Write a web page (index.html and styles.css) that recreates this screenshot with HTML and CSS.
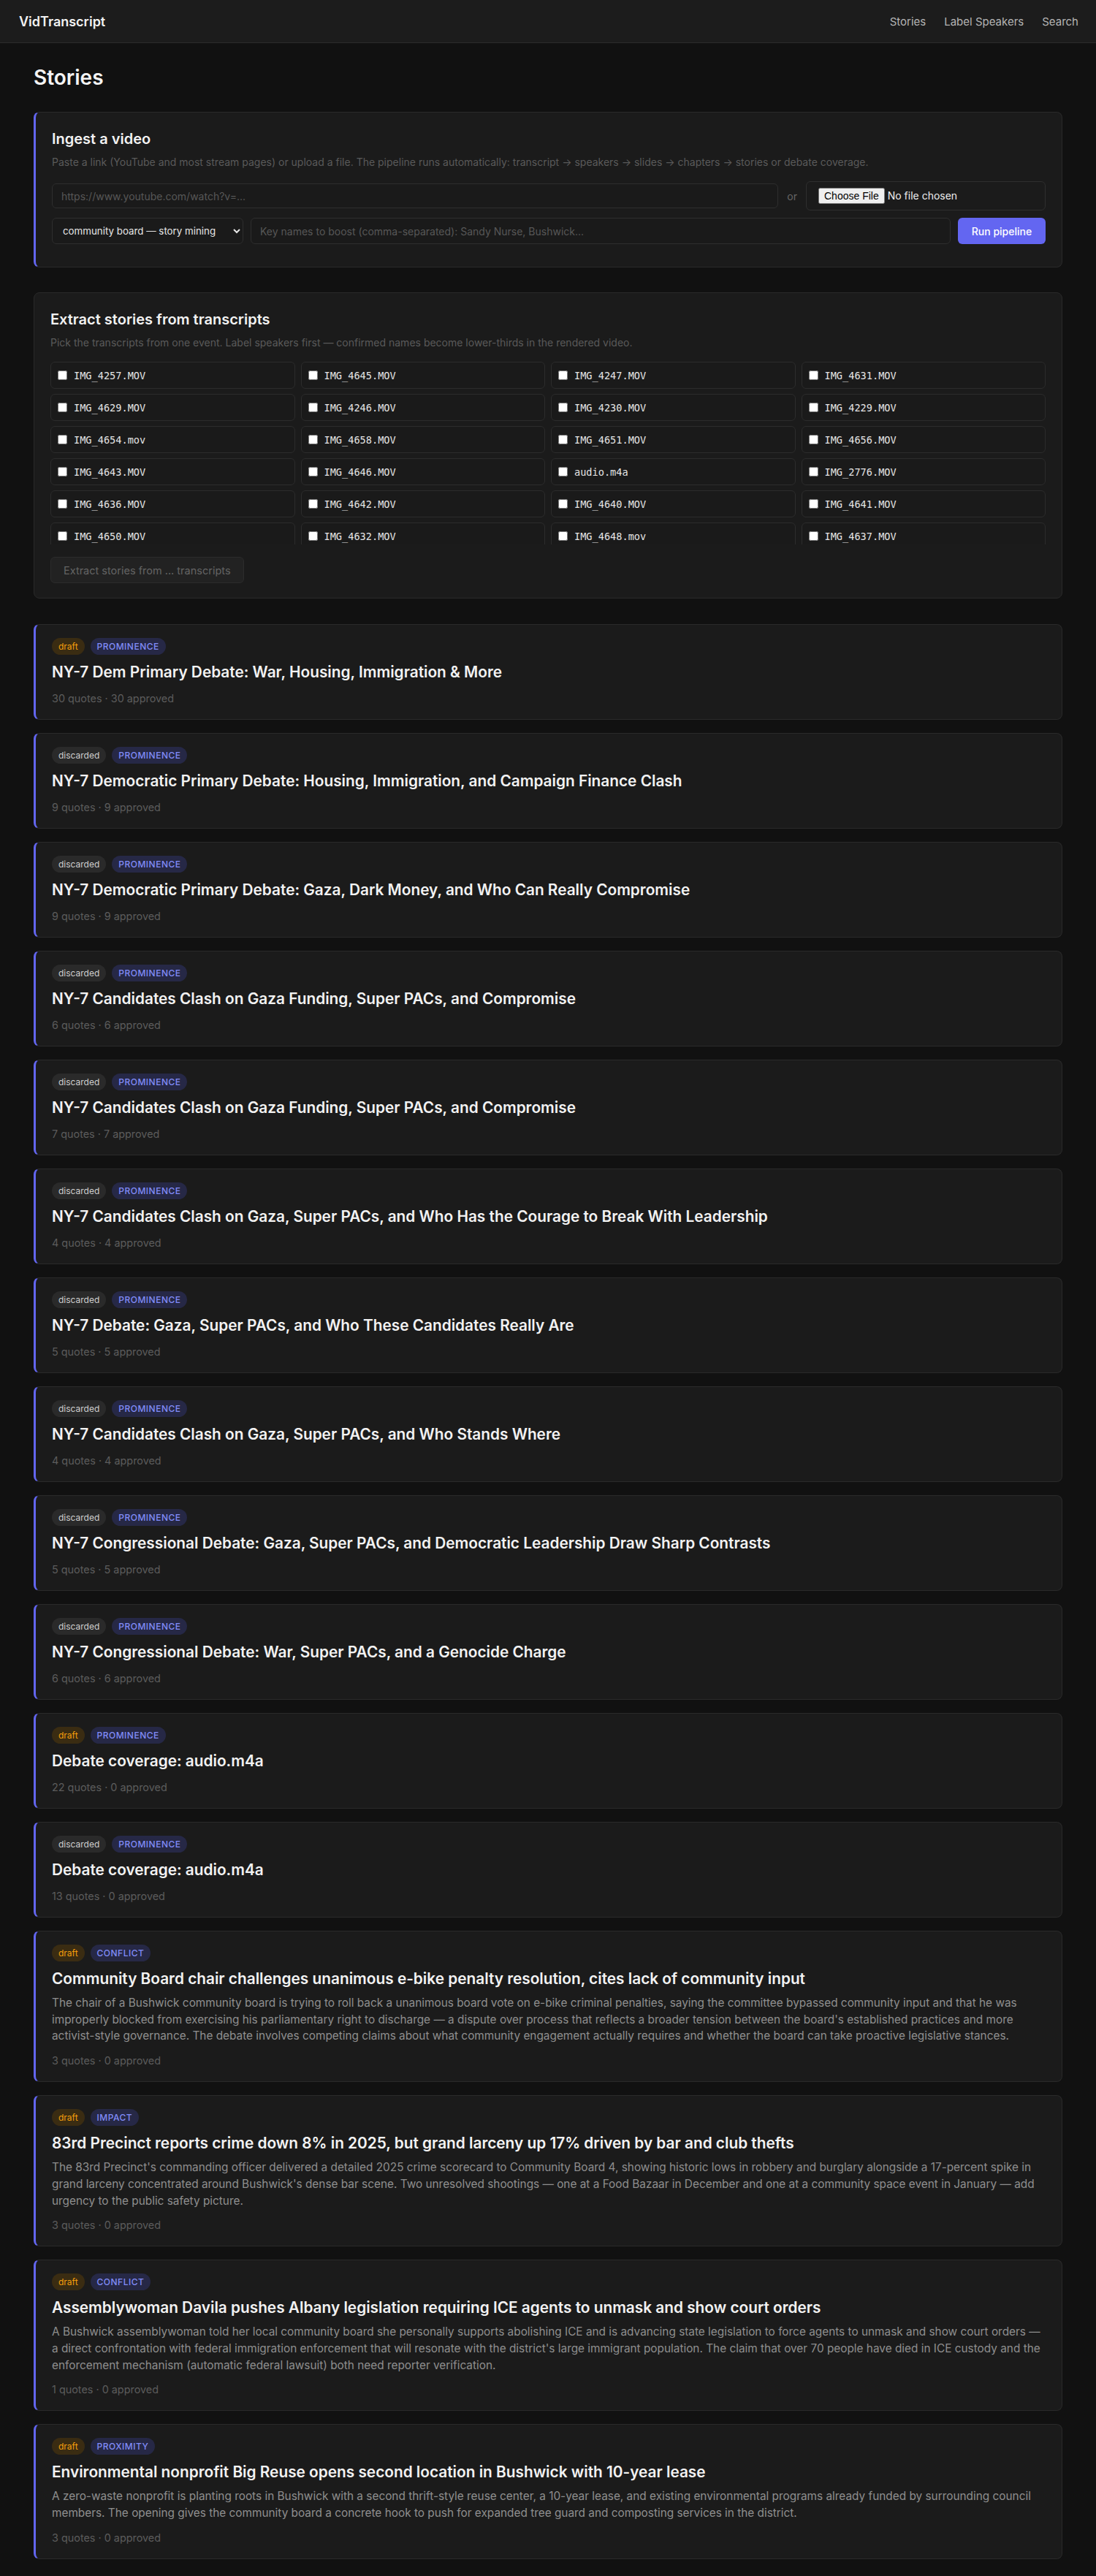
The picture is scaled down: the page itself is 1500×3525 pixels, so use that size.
FILE: index.html
```html
<!DOCTYPE html>
<html lang="en">
<head>
<meta charset="utf-8">
<title>VidTranscript — Stories</title>
<link rel="stylesheet" href="styles.css">
</head>
<body>
<header class="topbar">
  <div class="brand">VidTranscript</div>
  <nav class="nav">
    <a href="#">Stories</a>
    <a href="#">Label Speakers</a>
    <a href="#">Search</a>
  </nav>
</header>

<main class="main">
  <h1 class="page-title">Stories</h1>

  <section class="panel panel-accent">
    <h2 class="panel-title">Ingest a video</h2>
    <p class="panel-sub">Paste a link (YouTube and most stream pages) or upload a file. The pipeline runs automatically: transcript → speakers → slides → chapters → stories or debate coverage.</p>
    <div class="form-row">
      <input class="field field-url" type="text" placeholder="https://www.youtube.com/watch?v=...">
      <span class="or">or</span>
      <div class="filebox"><input type="file" class="file"></div>
    </div>
    <div class="form-row">
      <select class="field field-select">
        <option>community board — story mining</option>
      </select>
      <input class="field field-keys" type="text" placeholder="Key names to boost (comma-separated): Sandy Nurse, Bushwick...">
      <button class="btn-primary" type="button">Run pipeline</button>
    </div>
  </section>

  <section class="panel panel-extract">
    <h2 class="panel-title">Extract stories from transcripts</h2>
    <p class="panel-sub">Pick the transcripts from one event. Label speakers first — confirmed names become lower-thirds in the rendered video.</p>
    <div class="pick-grid">
      <label class="pick"><input type="checkbox"><span>IMG_4257.MOV</span></label>
      <label class="pick"><input type="checkbox"><span>IMG_4645.MOV</span></label>
      <label class="pick"><input type="checkbox"><span>IMG_4247.MOV</span></label>
      <label class="pick"><input type="checkbox"><span>IMG_4631.MOV</span></label>
      <label class="pick"><input type="checkbox"><span>IMG_4629.MOV</span></label>
      <label class="pick"><input type="checkbox"><span>IMG_4246.MOV</span></label>
      <label class="pick"><input type="checkbox"><span>IMG_4230.MOV</span></label>
      <label class="pick"><input type="checkbox"><span>IMG_4229.MOV</span></label>
      <label class="pick"><input type="checkbox"><span>IMG_4654.mov</span></label>
      <label class="pick"><input type="checkbox"><span>IMG_4658.MOV</span></label>
      <label class="pick"><input type="checkbox"><span>IMG_4651.MOV</span></label>
      <label class="pick"><input type="checkbox"><span>IMG_4656.MOV</span></label>
      <label class="pick"><input type="checkbox"><span>IMG_4643.MOV</span></label>
      <label class="pick"><input type="checkbox"><span>IMG_4646.MOV</span></label>
      <label class="pick"><input type="checkbox"><span>audio.m4a</span></label>
      <label class="pick"><input type="checkbox"><span>IMG_2776.MOV</span></label>
      <label class="pick"><input type="checkbox"><span>IMG_4636.MOV</span></label>
      <label class="pick"><input type="checkbox"><span>IMG_4642.MOV</span></label>
      <label class="pick"><input type="checkbox"><span>IMG_4640.MOV</span></label>
      <label class="pick"><input type="checkbox"><span>IMG_4641.MOV</span></label>
      <label class="pick"><input type="checkbox"><span>IMG_4650.MOV</span></label>
      <label class="pick"><input type="checkbox"><span>IMG_4632.MOV</span></label>
      <label class="pick"><input type="checkbox"><span>IMG_4648.mov</span></label>
      <label class="pick"><input type="checkbox"><span>IMG_4637.MOV</span></label>
    </div>
    <button class="btn-disabled" type="button" disabled>Extract stories from ... transcripts</button>
  </section>

  <div class="story-list">
    <article class="story">
      <div class="badges"><span class="badge badge-draft">draft</span><span class="badge badge-cat">PROMINENCE</span></div>
      <h3 class="story-title">NY-7 Dem Primary Debate: War, Housing, Immigration &amp; More</h3>
      <div class="story-meta">30 quotes · 30 approved</div>
    </article>
    <article class="story">
      <div class="badges"><span class="badge badge-discarded">discarded</span><span class="badge badge-cat">PROMINENCE</span></div>
      <h3 class="story-title">NY-7 Democratic Primary Debate: Housing, Immigration, and Campaign Finance Clash</h3>
      <div class="story-meta">9 quotes · 9 approved</div>
    </article>
    <article class="story">
      <div class="badges"><span class="badge badge-discarded">discarded</span><span class="badge badge-cat">PROMINENCE</span></div>
      <h3 class="story-title">NY-7 Democratic Primary Debate: Gaza, Dark Money, and Who Can Really Compromise</h3>
      <div class="story-meta">9 quotes · 9 approved</div>
    </article>
    <article class="story">
      <div class="badges"><span class="badge badge-discarded">discarded</span><span class="badge badge-cat">PROMINENCE</span></div>
      <h3 class="story-title">NY-7 Candidates Clash on Gaza Funding, Super PACs, and Compromise</h3>
      <div class="story-meta">6 quotes · 6 approved</div>
    </article>
    <article class="story">
      <div class="badges"><span class="badge badge-discarded">discarded</span><span class="badge badge-cat">PROMINENCE</span></div>
      <h3 class="story-title">NY-7 Candidates Clash on Gaza Funding, Super PACs, and Compromise</h3>
      <div class="story-meta">7 quotes · 7 approved</div>
    </article>
    <article class="story">
      <div class="badges"><span class="badge badge-discarded">discarded</span><span class="badge badge-cat">PROMINENCE</span></div>
      <h3 class="story-title">NY-7 Candidates Clash on Gaza, Super PACs, and Who Has the Courage to Break With Leadership</h3>
      <div class="story-meta">4 quotes · 4 approved</div>
    </article>
    <article class="story">
      <div class="badges"><span class="badge badge-discarded">discarded</span><span class="badge badge-cat">PROMINENCE</span></div>
      <h3 class="story-title">NY-7 Debate: Gaza, Super PACs, and Who These Candidates Really Are</h3>
      <div class="story-meta">5 quotes · 5 approved</div>
    </article>
    <article class="story">
      <div class="badges"><span class="badge badge-discarded">discarded</span><span class="badge badge-cat">PROMINENCE</span></div>
      <h3 class="story-title">NY-7 Candidates Clash on Gaza, Super PACs, and Who Stands Where</h3>
      <div class="story-meta">4 quotes · 4 approved</div>
    </article>
    <article class="story">
      <div class="badges"><span class="badge badge-discarded">discarded</span><span class="badge badge-cat">PROMINENCE</span></div>
      <h3 class="story-title">NY-7 Congressional Debate: Gaza, Super PACs, and Democratic Leadership Draw Sharp Contrasts</h3>
      <div class="story-meta">5 quotes · 5 approved</div>
    </article>
    <article class="story">
      <div class="badges"><span class="badge badge-discarded">discarded</span><span class="badge badge-cat">PROMINENCE</span></div>
      <h3 class="story-title">NY-7 Congressional Debate: War, Super PACs, and a Genocide Charge</h3>
      <div class="story-meta">6 quotes · 6 approved</div>
    </article>
    <article class="story">
      <div class="badges"><span class="badge badge-draft">draft</span><span class="badge badge-cat">PROMINENCE</span></div>
      <h3 class="story-title">Debate coverage: audio.m4a</h3>
      <div class="story-meta">22 quotes · 0 approved</div>
    </article>
    <article class="story">
      <div class="badges"><span class="badge badge-discarded">discarded</span><span class="badge badge-cat">PROMINENCE</span></div>
      <h3 class="story-title">Debate coverage: audio.m4a</h3>
      <div class="story-meta">13 quotes · 0 approved</div>
    </article>
    <article class="story">
      <div class="badges"><span class="badge badge-draft">draft</span><span class="badge badge-cat">CONFLICT</span></div>
      <h3 class="story-title">Community Board chair challenges unanimous e-bike penalty resolution, cites lack of community input</h3>
      <p class="story-desc">The chair of a Bushwick community board is trying to roll back a unanimous board vote on e-bike criminal penalties, saying the committee bypassed community input and that he was improperly blocked from exercising his parliamentary right to discharge — a dispute over process that reflects a broader tension between the board's established practices and more activist-style governance. The debate involves competing claims about what community engagement actually requires and whether the board can take proactive legislative stances.</p>
      <div class="story-meta">3 quotes · 0 approved</div>
    </article>
    <article class="story">
      <div class="badges"><span class="badge badge-draft">draft</span><span class="badge badge-cat">IMPACT</span></div>
      <h3 class="story-title">83rd Precinct reports crime down 8% in 2025, but grand larceny up 17% driven by bar and club thefts</h3>
      <p class="story-desc">The 83rd Precinct's commanding officer delivered a detailed 2025 crime scorecard to Community Board 4, showing historic lows in robbery and burglary alongside a 17-percent spike in grand larceny concentrated around Bushwick's dense bar scene. Two unresolved shootings — one at a Food Bazaar in December and one at a community space event in January — add urgency to the public safety picture.</p>
      <div class="story-meta">3 quotes · 0 approved</div>
    </article>
    <article class="story">
      <div class="badges"><span class="badge badge-draft">draft</span><span class="badge badge-cat">CONFLICT</span></div>
      <h3 class="story-title">Assemblywoman Davila pushes Albany legislation requiring ICE agents to unmask and show court orders</h3>
      <p class="story-desc">A Bushwick assemblywoman told her local community board she personally supports abolishing ICE and is advancing state legislation to force agents to unmask and show court orders — a direct confrontation with federal immigration enforcement that will resonate with the district's large immigrant population. The claim that over 70 people have died in ICE custody and the enforcement mechanism (automatic federal lawsuit) both need reporter verification.</p>
      <div class="story-meta">1 quotes · 0 approved</div>
    </article>
    <article class="story">
      <div class="badges"><span class="badge badge-draft">draft</span><span class="badge badge-cat">PROXIMITY</span></div>
      <h3 class="story-title">Environmental nonprofit Big Reuse opens second location in Bushwick with 10-year lease</h3>
      <p class="story-desc">A zero-waste nonprofit is planting roots in Bushwick with a second thrift-style reuse center, a 10-year lease, and existing environmental programs already funded by surrounding council members. The opening gives the community board a concrete hook to push for expanded tree guard and composting services in the district.</p>
      <div class="story-meta">3 quotes · 0 approved</div>
    </article>
  </div>
</main>
</body>
</html>
```

FILE: styles.css
```css
* { box-sizing: border-box; }

html, body {
  margin: 0;
  padding: 0;
  background: #111111;
  color: #ededed;
  font-family: Inter, "Noto Sans", "Liberation Sans", sans-serif;
}

.topbar {
  height: 59px;
  background: #1c1c1c;
  border-bottom: 1px solid #2c2c2c;
  display: flex;
  align-items: center;
  justify-content: space-between;
  padding: 0 24px 0 26px;
}

.brand {
  font-size: 18px;
  font-weight: 600;
  color: #f2f2f2;
}

.nav {
  display: flex;
  gap: 25px;
}

.nav a {
  color: #b4b4b4;
  text-decoration: none;
  font-size: 15px;
}

.main {
  padding: 29px 46px 26px;
}

.page-title {
  margin: 0 0 29px;
  font-size: 28px;
  line-height: 36px;
  font-weight: 600;
  color: #f4f4f4;
}

.panel {
  background: #1b1b1b;
  border: 1px solid #2a2a2a;
  border-radius: 8px;
  padding: 22px 22px 20px;
  margin-bottom: 34px;
}

.panel-accent {
  border-left: 3px solid #6366f1;
  padding-bottom: 21px;
}

.panel-extract {
  margin-bottom: 35px;
}

.panel-title {
  margin: 0 0 8px;
  font-size: 20px;
  line-height: 28px;
  font-weight: 600;
  color: #f2f2f2;
}

.panel-sub {
  margin: 0 0 16px;
  font-size: 14px;
  line-height: 20px;
  color: #5a5a5a;
}

.form-row {
  display: flex;
  align-items: center;
  gap: 10px;
  margin-bottom: 10px;
}

.field {
  height: 34px;
  background: #1a1a1a;
  border: 1px solid #2e2e2e;
  border-radius: 6px;
  color: #e6e6e6;
  font-family: Inter, "Noto Sans", sans-serif;
  font-size: 14px;
  padding: 0 12px;
  outline: none;
}

.field::placeholder { color: #575757; }

.field-url { flex: 1; }

.or {
  color: #666;
  font-size: 14px;
  padding: 0 2px;
}

.filebox {
  width: 328px;
  height: 40px;
  border: 1px solid #2e2e2e;
  border-radius: 6px;
  display: flex;
  align-items: center;
  padding: 0 16px;
}

.file {
  color: #f0f0f0;
  font-family: Inter, "Noto Sans", sans-serif;
  font-size: 14px;
}

.field-select {
  width: 262px;
  height: 36px;
  padding: 0 10px;
  font-size: 13.33px;
}

.field-keys {
  flex: 1;
  height: 36px;
}

.btn-primary {
  width: 120px;
  height: 36px;
  background: #6366f1;
  color: #ffffff;
  border: none;
  border-radius: 6px;
  font-family: Inter, "Noto Sans", sans-serif;
  font-size: 14px;
  font-weight: 500;
}

.pick-grid {
  display: grid;
  grid-template-columns: repeat(4, 1fr);
  column-gap: 8px;
  row-gap: 7px;
  max-height: 250px;
  overflow: hidden;
  margin-bottom: 17px;
}

.pick {
  height: 37px;
  display: flex;
  align-items: center;
  gap: 9px;
  padding: 0 9px;
  border: 1px solid #2c2c2c;
  border-radius: 6px;
  background: #1a1a1a;
  font-family: "DejaVu Sans Mono", "Liberation Mono", monospace;
  font-size: 13.6px;
  color: #e4e4e4;
}

.pick input {
  margin: 0;
  width: 13px;
  height: 13px;
}

.btn-disabled {
  height: 36px;
  padding: 0 17px;
  background: #222222;
  border: 1px solid #2c2c2c;
  border-radius: 6px;
  color: #646464;
  font-family: Inter, "Noto Sans", sans-serif;
  font-size: 14.5px;
}

.story-list {
  display: flex;
  flex-direction: column;
  gap: 18px;
}

.story {
  display: flex;
  flex-direction: column;
  align-items: flex-start;
  background: #1b1b1b;
  border: 1px solid #2a2a2a;
  border-left: 3px solid #6366f1;
  border-radius: 8px;
  padding: 18px 22px;
}

.badges {
  display: flex;
  gap: 8px;
  margin-bottom: 10px;
}

.badge {
  display: inline-block;
  height: 23px;
  line-height: 23px;
  padding: 0 9px;
  border-radius: 12px;
  font-size: 12px;
}

.badge-draft {
  background: #3a2c12;
  color: #f59e0b;
}

.badge-discarded {
  background: #2a2a2a;
  color: #cfcfcf;
}

.badge-cat {
  background: #262846;
  color: #818cf8;
  letter-spacing: 0.04em;
  font-weight: 500;
}

.story-title {
  margin: 0 0 8px;
  font-size: 20.8px;
  line-height: 28px;
  font-weight: 600;
  color: #f2f2f2;
}

.story-desc {
  margin: 0 0 8px;
  font-size: 15.36px;
  line-height: 22.7px;
  color: #8e8e8e;
}

.story-meta {
  margin-top: 4px;
  font-size: 14.4px;
  line-height: 20px;
  color: #5c5c5c;
}
```
